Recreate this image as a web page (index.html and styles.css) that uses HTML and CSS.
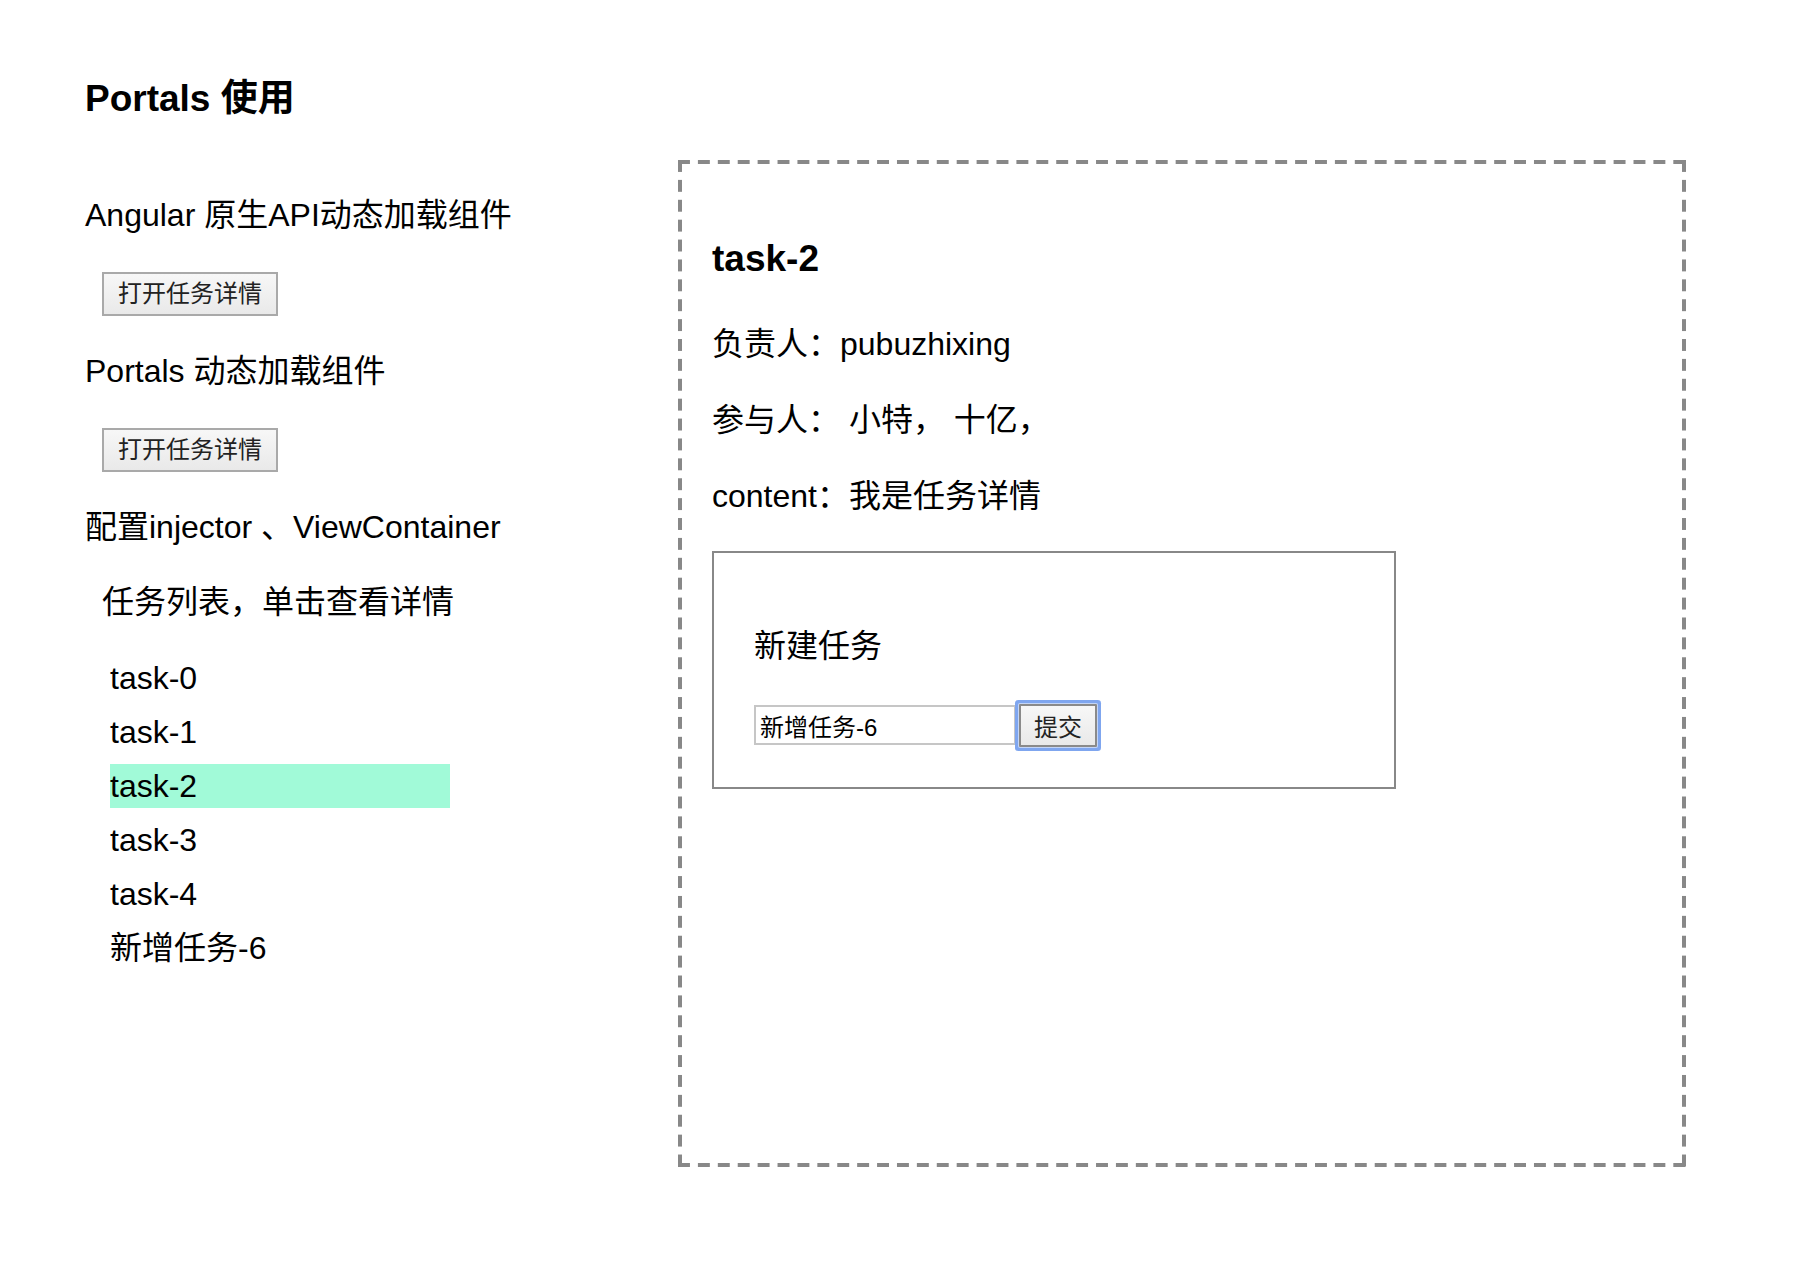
FILE: index.html
```html
<!DOCTYPE html>
<html lang="zh-CN">
<head>
<meta charset="utf-8">
<title>Portals 使用</title>
<link rel="stylesheet" href="styles.css">
</head>
<body>
<main class="page">
  <h3 class="page-title">Portals 使用</h3>
  <div class="layout">
    <section class="left">
      <p class="label">Angular 原生API动态加载组件</p>
      <button class="btn" type="button">打开任务详情</button>
      <p class="label after-btn">Portals 动态加载组件</p>
      <button class="btn" type="button">打开任务详情</button>
      <p class="label after-btn">配置injector 、ViewContainer</p>
      <div class="task-list">
        <p class="label list-title">任务列表，单击查看详情</p>
        <ul class="tasks">
          <li>task-0</li>
          <li>task-1</li>
          <li class="active">task-2</li>
          <li>task-3</li>
          <li>task-4</li>
          <li>新增任务-6</li>
        </ul>
      </div>
    </section>
    <section class="panel">
      <h3 class="task-name">task-2</h3>
      <p class="label owner">负责人：pubuzhixing</p>
      <p class="label detail">参与人： 小特， 十亿，</p>
      <p class="label detail">content：我是任务详情</p>
      <div class="new-task">
        <p class="label new-title">新建任务</p>
        <form class="form-row">
          <input class="text-input" type="text" value="新增任务-6">
          <button class="submit" type="button">提交</button>
        </form>
      </div>
    </section>
  </div>
</main>
</body>
</html>
```

FILE: styles.css
```css
html, body {
  margin: 0;
  padding: 0;
  background: #ffffff;
}

body {
  font-family: "Liberation Sans", "Noto Sans CJK SC", sans-serif;
  color: #000000;
  font-size: 32px;
}

.page {
  padding-left: 85px;
}

.page-title {
  margin: 0;
  padding-top: 77px;
  font-size: 37px;
  line-height: 44px;
  font-weight: bold;
}

.layout {
  display: flex;
  align-items: flex-start;
  margin-top: 39px;
}

.left {
  flex: 0 0 593px;
  padding-top: 35px;
}

.label {
  margin: 0;
  font-size: 32px;
  line-height: 40px;
}

.after-btn {
  margin-top: 35px;
}

.btn {
  display: block;
  box-sizing: border-box;
  width: 176px;
  height: 44px;
  margin: 37px 0 0 17px;
  padding: 0 14px;
  border: 2px solid #a9a9a9;
  border-radius: 0;
  background: linear-gradient(#f7f7f7, #e9e9e9);
  font-family: "Liberation Sans", "Noto Sans CJK SC", sans-serif;
  font-size: 24px;
  line-height: 38px;
  color: #222222;
}

.list-title {
  margin-top: 35px;
  margin-left: 17px;
}

.tasks {
  list-style: none;
  margin: 34px 0 0 25px;
  padding: 0;
  display: flex;
  flex-direction: column;
  gap: 10px;
}

.tasks li {
  width: 340px;
  height: 44px;
  line-height: 44px;
  font-size: 32px;
}

.tasks li.active {
  background: #a1fad8;
}

.panel {
  flex: 0 0 1008px;
  box-sizing: border-box;
  height: 1007px;
  border: 4px solid transparent;
  background-origin: border-box;
  background-clip: border-box;
  background:
    linear-gradient(to right, #888888 12px, transparent 12px) 0 0 / 19.92px 4px repeat-x border-box,
    linear-gradient(to right, #888888 12px, transparent 12px) 0 100% / 19.92px 4px repeat-x border-box,
    linear-gradient(to bottom, #888888 12px, transparent 12px) 0 0 / 4px 19.9px repeat-y border-box,
    linear-gradient(to bottom, #888888 12px, transparent 12px) 100% 0 / 4px 19.9px repeat-y border-box;
  padding: 73px 30px 0 30px;
}

.task-name {
  margin: 0;
  font-size: 37px;
  line-height: 44px;
  font-weight: bold;
}

.owner {
  margin-top: 43px;
}

.detail {
  margin-top: 36px;
}

.new-task {
  box-sizing: border-box;
  width: 684px;
  height: 238px;
  margin-top: 35px;
  border: 2px solid #888888;
  padding: 73px 40px 0 40px;
}

.form-row {
  display: flex;
  align-items: flex-start;
  margin: 39px 0 0 0;
}

.text-input {
  box-sizing: border-box;
  width: 262px;
  height: 40px;
  margin: 0;
  padding: 0 4px;
  border: 2px solid #c6c6c6;
  font-family: "Liberation Sans", "Noto Sans CJK SC", sans-serif;
  font-size: 24px;
  color: #000000;
  background: #ffffff;
}

.submit {
  box-sizing: border-box;
  width: 78px;
  height: 43px;
  margin-left: 3px;
  margin-top: -1px;
  padding: 0;
  border: 2px solid #8a8a8a;
  border-radius: 1px;
  background: linear-gradient(#f7f7f7, #e9e9e9);
  box-shadow: 0 0 0 1px #c3d5f7, 0 0 0 4px #7fa6ef;
  font-family: "Liberation Sans", "Noto Sans CJK SC", sans-serif;
  font-size: 24px;
  color: #222222;
}
```
